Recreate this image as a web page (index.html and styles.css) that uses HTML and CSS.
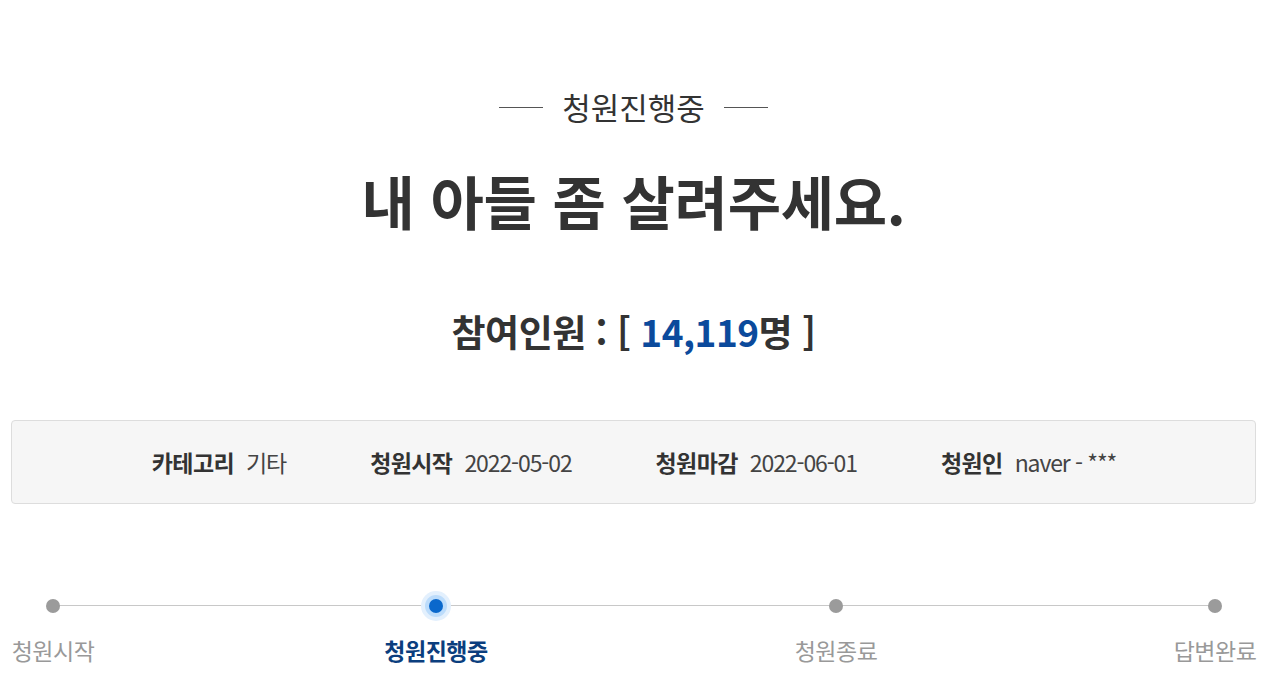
FILE: index.html
```html
<!DOCTYPE html>
<html lang="ko">
<head>
<meta charset="utf-8">
<link rel="stylesheet" href="styles.css">
</head>
<body>
<div class="page">
  <div class="status"><span class="status-line"></span><span class="status-text">청원진행중</span><span class="status-line"></span></div>
  <h1 class="title">내 아들 좀 살려주세요.</h1>
  <div class="count">참여인원 : [ <span class="num">14,119</span>명 ]</div>
  <div class="info">
    <div class="info-item"><span class="label">카테고리</span><span class="value">기타</span></div>
    <div class="info-item"><span class="label">청원시작</span><span class="value">2022-05-02</span></div>
    <div class="info-item"><span class="label">청원마감</span><span class="value">2022-06-01</span></div>
    <div class="info-item"><span class="label">청원인</span><span class="value">naver - ***</span></div>
  </div>
  <div class="steps">
    <div class="step s1"><span class="dot"></span><span class="step-label">청원시작</span></div>
    <div class="step s2 active"><span class="dot"></span><span class="step-label">청원진행중</span></div>
    <div class="step s3"><span class="dot"></span><span class="step-label">청원종료</span></div>
    <div class="step s4"><span class="dot"></span><span class="step-label">답변완료</span></div>
  </div>
</div>
</body>
</html>
```
FILE: styles.css
```css
* { box-sizing: border-box; }
html, body { margin: 0; padding: 0; background: #fff; }
body {
  font-family: "Noto Sans CJK KR", "Noto Sans", sans-serif;
  color: #333;
}
.page {
  padding: 0 17px 0 11px;
}
.status {
  display: flex;
  justify-content: center;
  align-items: center;
  gap: 19px;
  padding-top: 86px;
  height: 128px;
}
.status-line {
  width: 44px;
  height: 1px;
  background: #555;
}
.status-text {
  font-size: 31px;
  line-height: 40px;
  color: #333;
}
.title {
  margin: 0;
  text-align: center;
  font-size: 58px;
  font-weight: 700;
  line-height: 80px;
  margin-top: 32px;
  letter-spacing: -0.3px;
  color: #333;
}
.count {
  text-align: center;
  font-size: 37px;
  font-weight: 700;
  line-height: 50px;
  margin-top: 66px;
  letter-spacing: -0.5px;
  color: #333;
}
.count .num { color: #0b4a9c; }
.info {
  margin-top: 64px;
  height: 84px;
  border: 1px solid #ddd;
  border-radius: 4px;
  background: #f6f6f6;
  display: flex;
  justify-content: center;
  align-items: center;
  gap: 84px;
  padding-left: 1px;
}
.info-item {
  display: flex;
  align-items: center;
  gap: 12px;
  font-size: 23px;
  line-height: 30px;
  letter-spacing: -0.6px;
}
.label { font-weight: 700; color: #333; }
.value { font-weight: 400; color: #444; letter-spacing: -1.1px; }
.steps {
  position: relative;
  margin-top: 86px;
  display: grid;
  grid-template-columns: 82px 291px 102px 308px 82px 297px 82px;
  padding-left: 1px;
}
.steps::before {
  content: "";
  position: absolute;
  left: 41px;
  right: 41px;
  top: 15px;
  height: 1px;
  background: #c8c8c8;
}
.step {
  position: relative;
  display: flex;
  flex-direction: column;
  align-items: center;
}
.s1 { grid-column: 1; }
.s2 { grid-column: 3; }
.s3 { grid-column: 5; }
.s4 { grid-column: 7; }
.dot {
  width: 14px;
  height: 14px;
  margin-top: 9px;
  border-radius: 50%;
  background: #9b9b9b;
}
.active .dot {
  background: #0a68cc;
  box-shadow: 0 0 0 4px #bcdcfb, 0 0 0 8px #e3f0fd;
}
.step-label {
  margin-top: 22px;
  font-size: 23px;
  line-height: 30px;
  color: #999;
  letter-spacing: -0.5px;
  white-space: nowrap;
}
.active .step-label {
  color: #0b3e7e;
  font-weight: 700;
}
```
